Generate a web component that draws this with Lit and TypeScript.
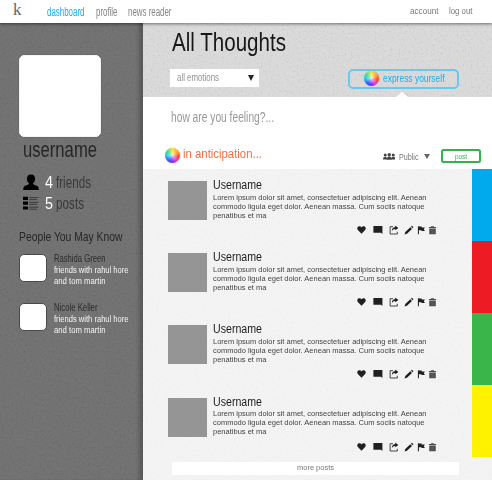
import { LitElement, html, css, svg } from "lit";
import { customElement, property } from "lit/decorators.js";

/** One line of text, condensed horizontally to an exact width. */
@customElement("fit-text")
class FitText extends LitElement {
  @property() text = "";
  @property({ type: Number }) w = 50;
  static styles = css`
    :host { display: block; line-height: 1; height: 1em; white-space: nowrap; flex: none; }
    .line { display: inline-block; transform-origin: 0 50%; vertical-align: top; }
  `;
  render() {
    return html`<span class="line">${this.text}</span>`;
  }
  updated() {
    this.style.width = this.w + "px";
    const line = this.renderRoot.querySelector(".line") as HTMLElement;
    line.style.transform = "none";
    const natural = line.getBoundingClientRect().width;
    if (natural) line.style.transform = `scaleX(${this.w / natural})`;
  }
}

/** Full-bleed paper grain. */
@customElement("paper-grain")
class PaperGrain extends LitElement {
  static styles = css`
    :host { position: absolute; inset: 0; overflow: hidden; pointer-events: none; }
    svg { display: block; width: 100%; height: 100%; }
  `;
  render() {
    return html`<svg>
      <filter id="g" x="0" y="0" width="100%" height="100%">
        <feTurbulence type="fractalNoise" baseFrequency=".5" numOctaves="2" seed="8"></feTurbulence>
        <feColorMatrix values="0 0 0 0 0  0 0 0 0 0  0 0 0 0 0  3 0 0 0 -1.5"></feColorMatrix>
      </filter>
      <rect width="100%" height="100%" filter="url(#g)"></rect>
    </svg>`;
  }
}

const icons = {
  heart: svg`<path d="M5 9.2 1.2 5.4C-.8 3 .8.8 2.8.8 4 .8 4.6 1.5 5 2.2 5.4 1.5 6 .8 7.2.8 9.2.8 10.8 3 8.8 5.4Z"/>`,
  comment: svg`<path d="M.4 1H9.4V9L8 7.8H.4Z"/>`,
  share: svg`<path d="M4 1.7H1.1V9H8.3V6.8" fill="none" stroke="#333" stroke-width=".9"/><path d="M6.2.5 9.4 2.9 6.2 5.2V3.9C4.6 3.9 3.6 4.6 2.8 6.4 2.8 3.9 4 2.2 6.2 2Z"/>`,
  pencil: svg`<path d="M.6 9.5 1.3 7.1 6.3 2.2 8 3.9 3 8.8ZM6.9 1.6 7.9.7 9.5 2.3 8.6 3.3Z"/>`,
  flag: svg`<path d="M1 .8H2.1V9.6H1ZM2.1 1.2H5.2V2.2H8.8L7.6 4.1 8.8 6.2H5V5.2H2.1Z"/>`,
  trash: svg`<path d="M1 1.6H3.4V.7H6.6V1.6H9V2.8H1ZM1.4 3.2H8.6V9.6H1.4Z" fill="#4c4c4c"/><path d="M3.6 4.3V9M5 4.3V9M6.4 4.3V9" stroke="#777" stroke-width=".4"/>`,
};

@customElement("post-card")
class PostCard extends LitElement {
  static styles = css`
    :host { display: flex; height: 72.2px; box-sizing: border-box; padding: 12px 0 0 25.6px; position: relative; }
    .pic { width: 39px; height: 39px; background: #959595; margin-right: 6px; flex: none; }
    .body { color: #444; font-size: 8px; }
    .name { font-size: 12px; color: #1d1d1d; margin: -2px 0 2.8px -.5px; }
    .row { margin-bottom: 1px; }
    .acts { display: flex; align-items: center; margin: 5.2px 0 0 144.3px; color: #202020; }
    svg { display: block; width: 10px; height: 10px; margin-right: 4px; overflow: visible; fill: currentColor; }
    .heart { width: 9px; margin-right: 6.4px; }
    .comment { margin-right: 5.8px; }
    .share { margin-right: 5px; }
    .pencil { margin-right: 3.4px; }
    .flag { margin-right: 2.5px; width: 9px; }
    .trash { width: 9px; }
  `;
  render() {
    return html`
      <div class="pic"></div>
      <div class="body">
        <fit-text class="name" text="Username" w="49"></fit-text>
        <fit-text class="row" text="Lorem ipsum dolor sit amet, consectetuer adipiscing elit. Aenean" w="213.5"></fit-text>
        <fit-text class="row" text="commodo ligula eget dolor. Aenean massa. Cum sociis natoque" w="211.5"></fit-text>
        <fit-text class="row" text="penatibus et ma" w="53.5"></fit-text>
        <div class="acts">
          ${Object.entries(icons).map(([name, art]) => html`<svg class=${name} viewBox="0 0 10 10">${art}</svg>`)}
        </div>
      </div>`;
  }
}

@customElement("app-root")
class AppRoot extends LitElement {
  static styles = css`
    :host { display: block; width: 492px; height: 480px; overflow: hidden; position: relative; background: #fff;
      font-family: "Liberation Sans", Arial, sans-serif; }
    * { box-sizing: border-box; }
    .top { height: 23px; background: #fff; display: flex; align-items: flex-start; position: relative; z-index: 3;
      box-shadow: 0 1px 3px rgba(0,0,0,.5); color: #888; padding-left: 13px; }
    .logo { font-family: "Liberation Serif", serif; font-size: 17px; margin-top: 1px; margin-right: 25.5px; color: #666; }
    .nav { font-size: 12px; margin: 5.6px 11px 0 0; color: #858585; }
    .on { color: #1badea; }
    .acct { font-size: 8.5px; margin: 7.4px 10.5px 0 0; color: #777; }
    .acct.first { margin-left: auto; }
    .acct.last { margin-right: 19.5px; }
    .main { display: flex; height: 457px; }
    .side { width: 142.5px; background: #737373; position: relative; flex: none; padding: 32px 0 0 19px; color: #262626;
      box-shadow: inset -5px 0 5px -3px rgba(0,0,0,.3); border-right: 1px solid #5a5a5a; }
    .side > :not(paper-grain) { position: relative; }
    .side paper-grain { opacity: .07; }
    .avatar { width: 82px; height: 82px; border-radius: 5px; background: #fff; border: 1px solid #f3f3f3; box-shadow: 0 0 1px #444; }
    .user { font-size: 22px; margin: 2.2px 0 0 4px; }
    .stats { margin-top: 12.5px; }
    .stat { display: flex; margin-left: 3.5px; height: 20.5px; font-size: 17px; }
    .stat svg { width: 16px; height: 17px; margin-right: 6px; }
    .stat fit-text { margin-top: .5px; }
    .stat .num { color: #fff; margin-right: 3px; }
    .word { color: #3a3a3a; }
    .know { font-size: 13px; margin: 15.6px 0 0 -.5px; }
    .friends { margin-top: 10px; }
    .friend { display: flex; height: 49px; }
    .pic { width: 28px; height: 28px; background: #fff; border: 1px solid #4a4a4a; border-radius: 5px; margin-right: 6.5px; margin-top: .3px; }
    .fname { font-size: 10.5px; margin-top: -.5px; color: #2c2c2c; }
    .note { font-size: 8.5px; color: #f5f5f5; margin-top: 2.6px; }
    .content { flex: 1; display: flex; flex-direction: column; position: relative; }
    .band { height: 74px; background: #dadada; position: relative; padding: 5.8px 0 0 27.5px; }
    .band paper-grain { opacity: .06; }
    .title { font-size: 26px; margin-left: 2px; color: #171717; position: relative; }
    .tools { display: flex; margin-top: 14.2px; position: relative; }
    .select { width: 89px; height: 18px; background: #fff; display: flex; padding: 3px 5px 0 7px; color: #929292; font-size: 11.5px; margin-right: 89.2px; }
    .tri { width: 0; height: 0; border: 3px solid transparent; border-top: 5.5px solid #262626; border-bottom: 0; }
    .select .tri { margin: 3.2px 0 0 auto; border-width: 6px 3.2px 0; }
    .express { width: 110.5px; height: 20px; border: 2px solid #69c8f0; border-radius: 5px; display: flex; padding: 0 0 0 14.3px; color: #1badea; font-size: 11px; }
    .express fit-text { margin: 2px 0 0 3.6px; }
    .wheel { width: 15px; height: 15px; border-radius: 50%; flex: none; box-shadow: 0 0 1px #777;
      background: radial-gradient(circle, rgba(255,255,255,.75), transparent 55%),
        conic-gradient(#ffe23c, #ff9b28 60deg, #ff3b3b 100deg, #f03bd0 140deg, #7c2bff 180deg, #3857ff 220deg, #27c9f5 270deg, #38e878 310deg, #ffe23c); }
    .notch { position: absolute; left: 253.5px; bottom: 0; width: 0; height: 0; border: 6px solid transparent; border-bottom: 5px solid #fff; border-top: 0; }
    .compose { height: 72px; padding: 13.2px 0 0 22.5px; background: #fff; }
    .ask { font-size: 14px; color: #999; margin-left: 6px; }
    .mood { display: flex; height: 15px; margin-top: 23.4px; }
    .feel { font-size: 12px; color: #f2703f; margin: .9px 0 0 3px; }
    .crowd { width: 12.5px; height: 7px; margin: 5.6px 3.5px 0 auto; fill: #444; }
    .pub { font-size: 8.5px; color: #777; margin: 5.2px 5.5px 0 0; }
    .mood .tri { border-top-color: #666; margin: 6px 11.5px 0 0; }
    .send { width: 40px; height: 13.5px; border: 2px solid #35b34a; border-radius: 2.5px; margin: 1.8px 11px 0 0; color: #35b34a; font-size: 7px; padding: 1.4px 0 0 12px; }
    .feed { flex: 1; background: #f3f3f3; position: relative; display: flex; align-items: flex-start; }
    .feed paper-grain { opacity: .02; }
    .list { flex: 1; position: relative; }
    .more { width: 287px; height: 13.5px; background: #fff; margin: 4px 0 0 29.5px; display: flex; justify-content: center; padding-top: 2.6px; font-size: 8px; color: #777; }
    .tags { width: 20px; flex: none; position: relative; }
    .tag { height: 72px; }
    .blue { background: #00aaed; }
    .red { background: #ed1c24; }
    .green { background: #39b54a; }
    .yellow { background: #fff200; }
  `;
  private people = [
    { name: "Rashida Green", w: 51.5 },
    { name: "Nicole Keller", w: 43.5 },
  ];
  render() {
    return html`
      <header class="top">
        <span class="logo"><fit-text text="k" w="8.5"></fit-text></span>
        <fit-text class="nav on" text="dashboard" w="37.5"></fit-text>
        <fit-text class="nav" text="profile" w="21.5"></fit-text>
        <fit-text class="nav" text="news reader" w="43.5"></fit-text>
        <fit-text class="acct first" text="account" w="28.5"></fit-text>
        <fit-text class="acct last" text="log out" w="23.5"></fit-text>
      </header>
      <div class="main">
        <aside class="side">
          <paper-grain></paper-grain>
          <div class="avatar"></div>
          <fit-text class="user" text="username" w="74"></fit-text>
          <div class="stats">
            <div class="stat">
              <svg viewBox="0 0 16 17"><path d="M8 .4C5.2.4 3.8 2.4 3.9 5 4 7 4.9 8.6 6.2 9.4 5.8 10.8 3.4 11 1.6 12 .4 12.8.3 14.4.2 16H15.8C15.7 14.4 15.6 12.8 14.4 12 12.6 11 10.2 10.8 9.8 9.4 11.1 8.6 12 7 12.1 5 12.2 2.4 10.8.4 8 .4Z"/></svg>
              <fit-text class="num" text="4" w="8"></fit-text>
              <fit-text class="word" text="friends" w="35"></fit-text>
            </div>
            <div class="stat">
              <svg viewBox="0 0 16 17"><path d="M0 2.8H5V6H0ZM0 7.6H5V10.8H0ZM0 12.4H5V15.6H0Z"/><path d="M6.2 3.6H15.5M6.2 5.6H13.8M6.2 8.4H15.5M6.2 10.4H13.8M6.2 13.2H15.5M6.2 15.2H13.8" stroke="#333" stroke-width=".9"/></svg>
              <fit-text class="num" text="5" w="8"></fit-text>
              <fit-text class="word" text="posts" w="28"></fit-text>
            </div>
          </div>
          <fit-text class="know" text="People You May Know" w="103.5"></fit-text>
          <div class="friends">
            ${this.people.map((p) => html`<div class="friend">
              <div class="pic"></div>
              <div>
                <fit-text class="fname" text=${p.name} w=${p.w}></fit-text>
                <fit-text class="note" text="friends with rahul hore" w="74.5"></fit-text>
                <fit-text class="note" text="and tom martin" w="51.5"></fit-text>
              </div>
            </div>`)}
          </div>
        </aside>
        <main class="content">
          <section class="band">
            <paper-grain></paper-grain>
            <fit-text class="title" text="All Thoughts" w="114"></fit-text>
            <div class="tools">
              <div class="select"><fit-text text="all emotions" w="42"></fit-text><i class="tri"></i></div>
              <div class="express"><i class="wheel"></i><fit-text text="express yourself" w="61.5"></fit-text></div>
            </div>
            <i class="notch"></i>
          </section>
          <section class="compose">
            <fit-text class="ask" text="how are you feeling?..." w="103"></fit-text>
            <div class="mood">
              <i class="wheel"></i>
              <fit-text class="feel" text="in anticipation..." w="79"></fit-text>
              <svg class="crowd" viewBox="0 0 25 14"><circle cx="4.5" cy="4" r="3"/><circle cx="12.5" cy="3.4" r="3.4"/><circle cx="20.5" cy="4" r="3"/><path d="M0 13C0 9 2 7.6 4.5 7.6S8 9 8 13ZM7.5 13.6C7.5 9 9.5 7.2 12.5 7.2S17.5 9 17.5 13.6ZM17 13C17 9 18 7.6 20.5 7.6S25 9 25 13Z"/></svg>
              <fit-text class="pub" text="Public" w="19.5"></fit-text>
              <i class="tri"></i>
              <div class="send"><fit-text text="post" w="12"></fit-text></div>
            </div>
          </section>
          <section class="feed">
            <paper-grain></paper-grain>
            <div class="list">
              <post-card></post-card><post-card></post-card><post-card></post-card><post-card></post-card>
              <div class="more"><fit-text text="more posts" w="37"></fit-text></div>
            </div>
            <div class="tags">
              ${["blue", "red", "green", "yellow"].map((c) => html`<div class="tag ${c}"></div>`)}
            </div>
          </section>
        </main>
      </div>`;
  }
}
